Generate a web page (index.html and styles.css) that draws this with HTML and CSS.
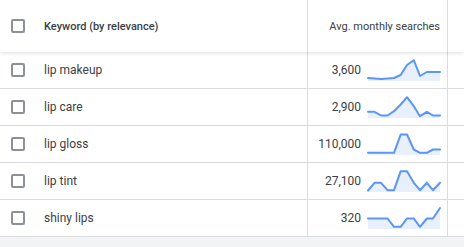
FILE: index.html
```html
<!DOCTYPE html>
<html>
<head>
<meta charset="utf-8">
<link rel="stylesheet" href="styles.css">
</head>
<body>
<div class="table">
  <div class="row head">
    <div class="cell check"><span class="box"></span></div>
    <div class="cell kw">Keyword (by relevance)</div>
    <div class="cell num">Avg. monthly searches</div>
    <div class="cell extra"></div>
  </div>
  <div class="row">
    <div class="cell check"><span class="box"></span></div>
    <div class="cell kw">lip makeup</div>
    <div class="cell num"><span class="val">3,600</span>
      <svg class="spark" viewBox="0 0 72 22" width="72" height="22"><polygon class="area" points="0,19 6.5,19.5 13,20 19.6,19.5 26,19 32.7,16 39,6 45.8,1.2 52,17 58.9,13 65,13 72,13 72,22 0,22"/><polyline class="line" points="0,19 6.5,19.5 13,20 19.6,19.5 26,19 32.7,16 39,6 45.8,1.2 52,17 58.9,13 65,13 72,13"/></svg>
    </div>
    <div class="cell extra"></div>
  </div>
  <div class="row">
    <div class="cell check"><span class="box"></span></div>
    <div class="cell kw">lip care</div>
    <div class="cell num"><span class="val">2,900</span>
      <svg class="spark" viewBox="0 0 72 22" width="72" height="22"><polygon class="area" points="0,15.8 6.5,15.8 13,19.5 19.6,19.5 26,15.2 32.7,8.5 39,1.2 45.8,10.2 52,20.2 58.9,15.8 65,19.5 72,19.5 72,22 0,22"/><polyline class="line" points="0,15.8 6.5,15.8 13,19.5 19.6,19.5 26,15.2 32.7,8.5 39,1.2 45.8,10.2 52,20.2 58.9,15.8 65,19.5 72,19.5"/></svg>
    </div>
    <div class="cell extra"></div>
  </div>
  <div class="row">
    <div class="cell check"><span class="box"></span></div>
    <div class="cell kw">lip gloss</div>
    <div class="cell num"><span class="val">110,000</span>
      <svg class="spark" viewBox="0 0 72 22" width="72" height="22"><polygon class="area" points="0,19.8 6.5,19.8 13,19.8 19.6,19.8 26,19.8 32.7,1.5 39,1.5 45.8,16.5 52,19.8 58.9,19.8 65,16.5 72,16.5 72,22 0,22"/><polyline class="line" points="0,19.8 6.5,19.8 13,19.8 19.6,19.8 26,19.8 32.7,1.5 39,1.5 45.8,16.5 52,19.8 58.9,19.8 65,16.5 72,16.5"/></svg>
    </div>
    <div class="cell extra"></div>
  </div>
  <div class="row">
    <div class="cell check"><span class="box"></span></div>
    <div class="cell kw">lip tint</div>
    <div class="cell num"><span class="val">27,100</span>
      <svg class="spark" viewBox="0 0 72 22" width="72" height="22"><polygon class="area" points="0,20.5 6.5,12.8 13,12.8 19.6,20.2 26,20.2 32.7,1.2 39,1.2 45.8,12.8 52,20.2 58.9,12.8 65,20.2 72,12.8 72,22 0,22"/><polyline class="line" points="0,20.5 6.5,12.8 13,12.8 19.6,20.2 26,20.2 32.7,1.2 39,1.2 45.8,12.8 52,20.2 58.9,12.8 65,20.2 72,12.8"/></svg>
    </div>
    <div class="cell extra"></div>
  </div>
  <div class="row">
    <div class="cell check"><span class="box"></span></div>
    <div class="cell kw">shiny lips</div>
    <div class="cell num"><span class="val">320</span>
      <svg class="spark" viewBox="0 0 72 22" width="72" height="22"><polygon class="area" points="0,11.5 6.5,11.5 13,11.5 19.6,11.5 26,19.8 32.7,19.8 39,11.5 45.8,11.5 52,19.8 58.9,11.5 65,11.5 72,1 72,22 0,22"/><polyline class="line" points="0,11.5 6.5,11.5 13,11.5 19.6,11.5 26,19.8 32.7,19.8 39,11.5 45.8,11.5 52,19.8 58.9,11.5 65,11.5 72,1"/></svg>
    </div>
    <div class="cell extra"></div>
  </div>
  <div class="footer"></div>
</div>
</body>
</html>
```

FILE: styles.css
```css
html, body {
  margin: 0;
  padding: 0;
  background: #ffffff;
}
body {
  font-family: Roboto, "Liberation Sans", Arial, sans-serif;
  font-size: 12px;
  color: #3c4043;
  width: 464px;
  height: 247px;
  overflow: hidden;
}
.table {
  display: flex;
  flex-direction: column;
  width: 464px;
}
.row {
  display: grid;
  grid-template-columns: 36px 271px 140px 17px;
  height: 37px;
  box-sizing: border-box;
  border-bottom: 1px solid #dadce0;
  background: #fff;
}
.row.head {
  height: 52px;
  border-bottom: none;
  position: relative;
  z-index: 2;
  font-size: 11px;
  box-shadow: 0 2px 3px rgba(60, 64, 67, 0.12);
}
.cell {
  display: flex;
  align-items: center;
  min-width: 0;
}
.check {
  padding-left: 11px;
}
.box {
  width: 14px;
  height: 14px;
  box-sizing: border-box;
  border: 2px solid #8d9096;
  border-radius: 2px;
}
.kw {
  padding-left: 8px;
}
.head .kw {
  font-weight: 500;
  color: #3c4043;
}
.num {
  border-left: 1px solid #dadce0;
  justify-content: flex-end;
  padding-right: 7px;
  gap: 7px;
}
.extra {
  border-left: 1px solid #dadce0;
}
.spark {
  display: block;
  overflow: visible;
}
.area {
  fill: #e8f0fe;
  stroke: none;
}
.line {
  fill: none;
  stroke: #5b95f5;
  stroke-width: 2;
  stroke-linejoin: round;
  stroke-linecap: round;
}
.footer {
  height: 20px;
  background: #f1f3f4;
}
```
